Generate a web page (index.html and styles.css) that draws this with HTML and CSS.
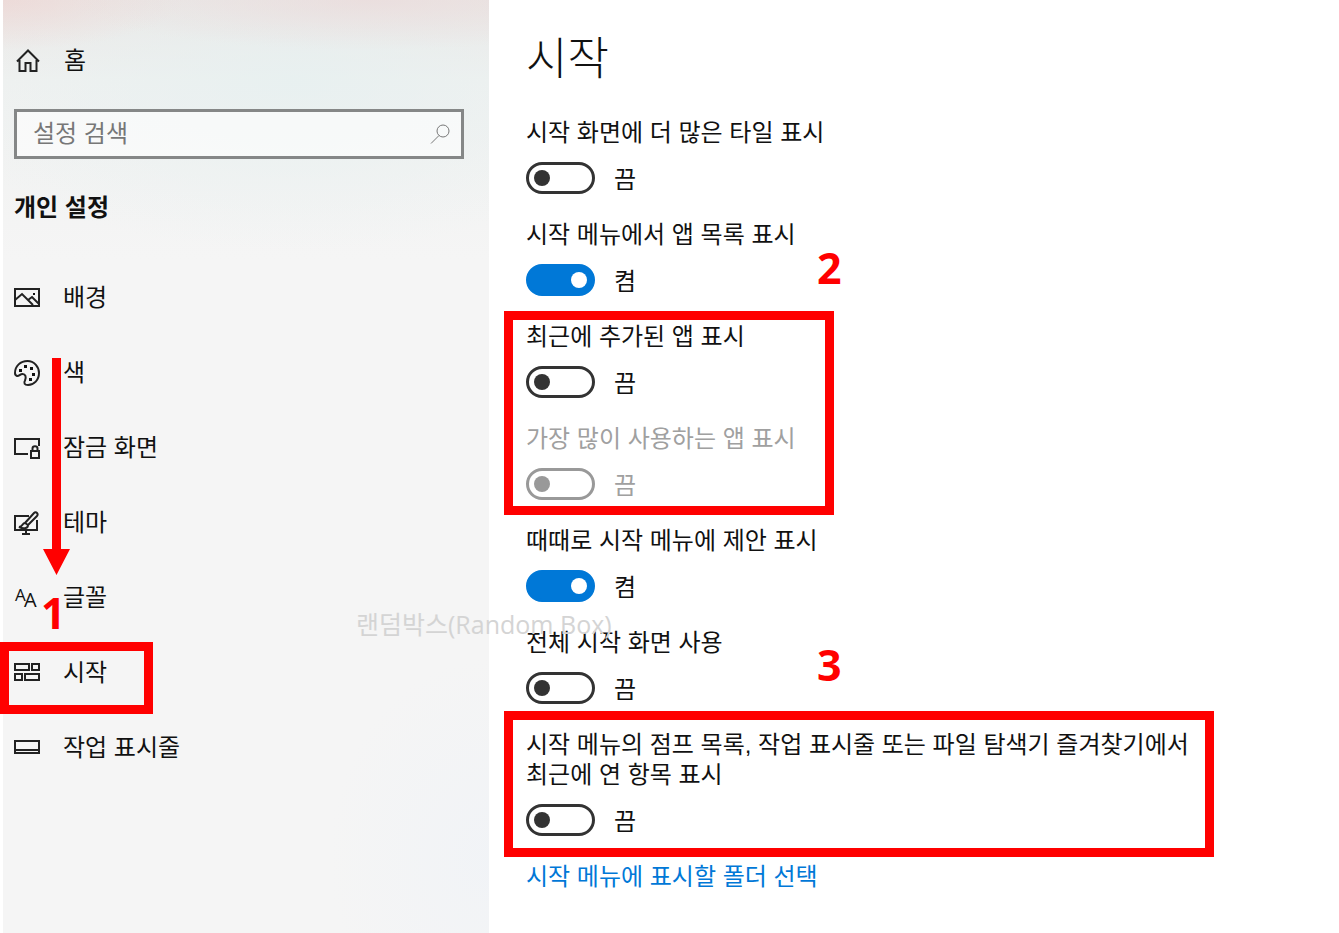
FILE: index.html
```html
<!DOCTYPE html>
<html lang="ko">
<head>
  <meta charset="UTF-8">
  <meta name="viewport" content="width=device-width, initial-scale=1.0">
  <title>설정 - 시작</title>
  <link rel="stylesheet" href="styles.css">
</head>
<body>

  <div class="settings">
    <aside class="sidebar">
      <a class="home" href="#">
        <svg class="icon" viewBox="0 0 26 26">
          <path d="M2 13.500L13 2.500L24 13.500M4.500 12V23H10.500V15H15.500V23H21.500V12"/>
        </svg>
        <span>홈</span>
      </a>

      <form class="search">
        <input type="text" id="search" placeholder="설정 검색" aria-label="설정 검색">
        <button type="button" aria-label="검색">
          <svg viewBox="0 0 22 22">
            <circle cx="14" cy="8" r="6"/>
            <path d="M10 12.500L2 20.500"/>
          </svg>
        </button>
      </form>

      <h2>개인 설정</h2>

      <nav class="menu">
        <a href="#">
          <svg class="icon" viewBox="0 0 26 26">
            <path d="M1 4H25V21H1ZM1 15L8 9L19 20M14 15L18 12L25 19"/>
            <path class="fill" d="M19 8h2v2h-2z"/>
          </svg>
          <span>배경</span>
        </a>
        <a href="#">
          <svg class="icon" viewBox="0 0 26 26">
            <path d="M1 13C1 6 6.500 1 13.500 1C20 1 25 6.500 25 13C25 20 20 25 14 25C10.500 25 9.500 23 11 20.500C12.500 17 11.500 14 8.500 14C6 14 5 16.500 3 16C1.500 15.500 1 14.500 1 13Z"/>
            <path class="fill" d="M5 9h3v3h-3zM10 5h3v3h-3zM16 7h3v3h-3zM18 13h3v3h-3zM15 18h3v3h-3z"/>
          </svg>
          <span>색</span>
        </a>
        <a href="#">
          <svg class="icon" viewBox="0 0 26 26">
            <path d="M14 19H1V4H25V11M17 16H25V23H17ZM18.500 16V13.500C18.500 10.500 23.500 10.500 23.500 13.500V16"/>
          </svg>
          <span>잠금 화면</span>
        </a>
        <a href="#">
          <svg class="icon" viewBox="0 0 26 26">
            <path d="M15 6H1V20H23V10M12 20V24M8 24H16M11 13L20 3C22 1 25 4 23 6L14 15M11 13C8 13 9 17 5 17C9 19 14 19 14 15ZM11 13L14 15"/>
          </svg>
          <span>테마</span>
        </a>
        <a href="#">
          <svg class="icon" viewBox="0 0 26 26">
            <text x="1" y="16" font-size="17">A</text>
            <text x="10" y="22" font-size="20">A</text>
          </svg>
          <span>글꼴</span>
        </a>
        <a href="#">
          <svg class="icon" viewBox="0 0 26 26">
            <path d="M1 4H15V10H1ZM18 4H25V10H18ZM1 14H8V20H1ZM11 14H25V20H11Z"/>
          </svg>
          <span>시작</span>
        </a>
        <a href="#">
          <svg class="icon" viewBox="0 0 26 26">
            <path d="M1 6H25V18H1ZM1 15H25"/>
          </svg>
          <span>작업 표시줄</span>
        </a>
      </nav>
    </aside>

    <main class="content">
      <h1>시작</h1>

      <div class="option">
        <label for="tiles">시작 화면에 더 많은 타일 표시</label>
        <div class="control"><input type="checkbox" id="tiles"><span>끔</span></div>
      </div>
      <div class="option">
        <label for="applist">시작 메뉴에서 앱 목록 표시</label>
        <div class="control"><input type="checkbox" id="applist" checked><span>켬</span></div>
      </div>
      <div class="option">
        <label for="recent">최근에 추가된 앱 표시</label>
        <div class="control"><input type="checkbox" id="recent"><span>끔</span></div>
      </div>
      <div class="option disabled">
        <label for="mostused">가장 많이 사용하는 앱 표시</label>
        <div class="control"><input type="checkbox" id="mostused" disabled><span>끔</span></div>
      </div>
      <div class="option">
        <label for="suggest">때때로 시작 메뉴에 제안 표시</label>
        <div class="control"><input type="checkbox" id="suggest" checked><span>켬</span></div>
      </div>
      <div class="option">
        <label for="full">전체 시작 화면 사용</label>
        <div class="control"><input type="checkbox" id="full"><span>끔</span></div>
      </div>
      <div class="option">
        <label for="jump">시작 메뉴의 점프 목록, 작업 표시줄 또는 파일 탐색기 즐겨찾기에서 최근에 연 항목 표시</label>
        <div class="control"><input type="checkbox" id="jump"><span>끔</span></div>
      </div>

      <a class="link" href="#">시작 메뉴에 표시할 폴더 선택</a>
    </main>

    <!-- Annotations -->
    <div class="watermark">랜덤박스(Random Box)</div>
    <svg class="arrow" viewBox="0 0 27 217">
      <path d="M9 0H18V191H27L13.500 217L0 191H9Z"/>
    </svg>
    <div class="mark mark-start"></div>
    <div class="mark mark-recent"></div>
    <div class="mark mark-jump"></div>
    <span class="number number-1">1</span>
    <span class="number number-2">2</span>
    <span class="number number-3">3</span>
  </div>

</body>
</html>
```

FILE: styles.css
```css
* {
  box-sizing: border-box;
}

body {
  margin: 0;
  background-color: #ffffff;
  color: #111111;
  font-family: "Liberation Sans", "Noto Sans CJK KR", sans-serif;
  font-size: 24px;
  line-height: 30px;
}

a {
  color: inherit;
  text-decoration: none;
}

.settings {
  position: relative;
  display: flex;
  min-height: 100vh;
}

/* Sidebar */
.sidebar {
  width: 486px;
  flex-shrink: 0;
  margin-left: 3px;
  padding: 46px 25px 0 11px;
  background:
    radial-gradient(ellipse 300px 50px at 75% 0, rgba(235, 218, 218, 0.7), transparent),
    radial-gradient(ellipse 180px 50px at 0 0, rgba(238, 214, 212, 0.7), transparent),
    radial-gradient(ellipse 380px 170px at 60% 80px, rgba(230, 240, 240, 0.8), transparent),
    radial-gradient(ellipse 160px 200px at 100% 92%, rgba(240, 243, 247, 0.8), transparent),
    linear-gradient(#ebe5e3, #f0f1f0 80px, #f5f5f5 260px);
}

.icon {
  width: 26px;
  height: 26px;
  flex-shrink: 0;
  fill: none;
  stroke: #222222;
  stroke-width: 2;
}

.icon .fill,
.icon text {
  fill: #111111;
  stroke: none;
}

.icon text {
  font-family: "Open Sans", sans-serif;
}

.home {
  display: flex;
  align-items: center;
  gap: 23px;
  padding-left: 1px;
}

.search {
  display: flex;
  height: 50px;
  margin: 33px 0 34px;
  border: 3px solid #858787;
  background-color: rgba(255, 255, 255, 0.6);
}

.search input {
  flex: 1;
  min-width: 0;
  padding: 0 16px;
  border: none;
  outline: none;
  background: none;
  font: inherit;
}

.search input::placeholder {
  color: #777777;
  opacity: 1;
}

.search button {
  width: 42px;
  padding: 0;
  border: none;
  background: none;
}

.search svg {
  display: block;
  width: 22px;
  height: 22px;
  margin: 0 auto;
  fill: none;
  stroke: #777777;
  stroke-width: 1;
}

h2 {
  margin: 0 0 37px;
  font-size: 24px;
  font-weight: bold;
}

.menu {
  display: flex;
  flex-direction: column;
}

.menu a {
  display: flex;
  align-items: center;
  gap: 23px;
  height: 75px;
}

/* Content */
.content {
  flex: 1;
  padding: 30px 124px 40px 37px;
}

h1 {
  margin: 0 0 28px;
  font-size: 45px;
  font-weight: 300;
  line-height: 60px;
}

.option {
  max-width: 680px;
  margin-bottom: 26px;
}

.option label {
  display: block;
  margin-bottom: 14px;
}

.control {
  display: flex;
  align-items: center;
  gap: 19px;
  height: 32px;
}

.control span {
  padding-top: 4px;
}

.control input {
  appearance: none;
  display: flex;
  align-items: center;
  width: 69px;
  height: 32px;
  margin: 0;
  padding: 0 5px;
  border: 3px solid #333333;
  border-radius: 16px;
}

.control input::before {
  content: "";
  width: 16px;
  height: 16px;
  border-radius: 50%;
  background-color: #333333;
}

.control input:checked {
  justify-content: flex-end;
  border-color: #0078d7;
  background-color: #0078d7;
}

.control input:checked::before {
  background-color: #ffffff;
}

.disabled {
  color: #a0a0a0;
}

.control input:disabled {
  border-color: #999999;
}

.control input:disabled::before {
  background-color: #999999;
}

.link {
  color: #0078d7;
}

/* Annotations over the page */
.mark {
  position: absolute;
  border: 9px solid #ff0000;
  pointer-events: none;
}

.mark-start {
  left: 0;
  top: 642px;
  width: 153px;
  height: 72px;
}

.mark-recent {
  left: 504px;
  top: 311px;
  width: 330px;
  height: 204px;
}

.mark-jump {
  left: 504px;
  top: 711px;
  width: 710px;
  height: 146px;
}

.arrow {
  position: absolute;
  left: 43px;
  top: 358px;
  width: 27px;
  height: 217px;
  fill: #ff0000;
}

.number {
  position: absolute;
  color: #ff0000;
  font-family: "Noto Sans", sans-serif;
  font-size: 43px;
  font-weight: bold;
  line-height: 44px;
}

.number-1 {
  left: 41px;
  top: 591px;
}

.number-2 {
  left: 817px;
  top: 246px;
}

.number-3 {
  left: 817px;
  top: 643px;
}

.watermark {
  position: absolute;
  left: 356px;
  top: 609px;
  color: #d4d4d4;
  font-family: "Open Sans", "Noto Sans CJK KR", sans-serif;
  font-size: 25px;
  pointer-events: none;
}
```
